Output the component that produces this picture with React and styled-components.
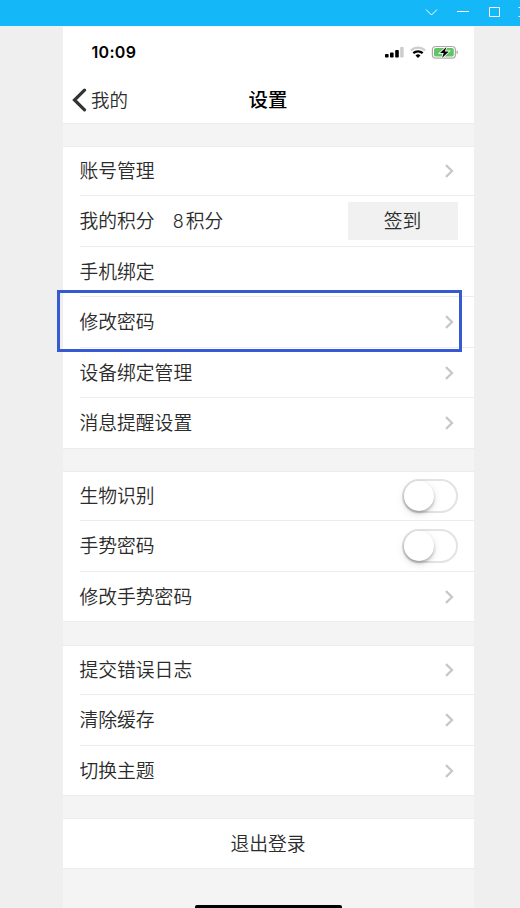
import React from 'react';
import styled, { createGlobalStyle, css } from 'styled-components';

const GlobalStyle = createGlobalStyle`
    *,
    *::after {
        box-sizing: border-box;
    }

    body {
        margin: 0;
        background-color: #efefef;
        font-family: 'Noto Sans CJK SC', sans-serif;
        overflow: hidden;
    }
`;

const Window = styled.div`
    height: 908px;
    overflow: hidden;
    background-color: #efefef;
`;

const TitleBar = styled.div`
    height: 26px;
    background-color: #14b8f8;
`;

const Phone = styled.main`
    width: 411px;
    height: 882px;
    margin-left: 63px;
    border-top: 1px solid #f8f8f8;
    background-color: #f4f4f4;
    display: flex;
    flex-direction: column;
`;

const StatusBar = styled.div`
    height: 50px;
    flex-shrink: 0;
    padding: 0 16px 0 28.5px;
    background-color: white;
    display: flex;
    align-items: center;
    justify-content: space-between;
`;

const Time = styled.span`
    font-family: Inter, sans-serif;
    font-size: 16px;
    font-weight: 600;
    letter-spacing: 0.3px;
    color: #000;
`;

const NavBar = styled.header`
    height: 47px;
    flex-shrink: 0;
    padding: 0 9px;
    background-color: white;
    border-bottom: 1px solid #ececec;
    display: grid;
    grid-template-columns: 1fr auto 1fr;
    align-items: center;
`;

const BackButton = styled.button`
    padding: 0;
    border: none;
    background: none;
    display: flex;
    align-items: center;
    gap: 4px;
    font-family: inherit;
    font-size: 18.5px;
    font-weight: 350;
    line-height: 24px;
    color: #2b2b2b;
`;

const BackText = styled.span`
    padding-bottom: 3px;
`;

const Title = styled.h1`
    margin: 0;
    padding: 0 1px 3px 0;
    font-size: 19.4px;
    line-height: 24px;
    font-weight: 500;
    color: #000;
`;

const Group = styled.section`
    flex-shrink: 0;
    margin-top: ${({ $gap }) => $gap}px;
    padding-left: 16.5px;
    background-color: white;
    border-top: 1px solid #ececec;
    border-bottom: 1px solid #ececec;
`;

const Row = styled.div`
    position: relative;
    height: ${({ $height }) => $height}px;
    padding-right: 16px;
    display: flex;
    align-items: center;
    font-size: 18.8px;
    font-weight: 350;
    line-height: 26px;
    color: #2b2b2b;

    &:not(:last-child) {
        border-bottom: 1px solid #ececec;
    }

    ${({ $marked }) => $marked && css`
        &::after {
            content: '';
            position: absolute;
            top: -7px;
            left: -22.5px;
            width: 405px;
            height: 62px;
            border: 3px solid #3759d1;
        }
    `}
`;

const Label = styled.span`
    flex: 1;
    padding-bottom: 2px;
`;

const Points = styled.span`
    margin-left: 18px;
`;

const Digit = styled.span`
    margin-right: 2px;
    font-family: Inter, sans-serif;
    font-size: 18px;
    font-weight: 350;
    line-height: 1;
`;

const CheckInButton = styled.button`
    width: 110px;
    height: 38px;
    padding: 0 1px 3px 0;
    border: none;
    background-color: #f1f1f1;
    font-family: inherit;
    font-size: 18.8px;
    font-weight: 350;
    line-height: 26px;
    color: #2b2b2b;
`;

const Switch = styled.span`
    width: 56px;
    height: 34px;
    border: 2px solid #e3e3e3;
    border-radius: 17px;
    background-color: white;
    display: flex;
    align-items: center;
`;

const Knob = styled.span`
    width: 30px;
    height: 30px;
    border-radius: 50%;
    background-color: white;
    box-shadow: 0 2px 3px rgba(0, 0, 0, 0.25), 0 3px 8px rgba(0, 0, 0, 0.12);
`;

const LogoutButton = styled.button`
    height: 51px;
    flex-shrink: 0;
    margin-top: 22px;
    padding: 0 1px 2px 0;
    border: solid #ececec;
    border-width: 1px 0;
    background-color: white;
    font-family: inherit;
    font-size: 18.8px;
    font-weight: 350;
    color: #2b2b2b;
`;

const HomeIndicator = styled.div`
    width: 147px;
    height: 5px;
    flex-shrink: 0;
    margin: 36px 0 0 132px;
    border-radius: 2px;
    background-color: #000;
`;

const WindowControls = () => (
    <svg width="520" height="26" fill="none" stroke="white" display="block">
        <path d="M426 9.5l5.5 5.5 5.5-5.5M457 11.5h12M489.5 7.5h10v9h-10zM520 7.5h-1.5M520 16.5h-1.5" />
    </svg>
);

const StatusIcons = () => (
    <svg width="75" height="14" viewBox="0 0 75 14">
        <rect x="2" y="9" width="3.6" height="3.6" rx="0.8" />
        <rect x="7" y="7.4" width="3.6" height="5.2" rx="0.8" />
        <rect x="12.2" y="4.9" width="3.6" height="7.7" rx="0.8" />
        <rect x="17.2" y="2" width="3.4" height="10.6" rx="0.8" fill="#ccc" />
        <g fill="none" strokeWidth="2.3">
            <path d="M28 5.4a10.4 10.4 0 0 1 14 0" stroke="#ccc" />
            <path d="M30.3 8.2a6.9 6.9 0 0 1 9.4 0" stroke="#000" />
        </g>
        <path d="M32.5 10.4a3.9 3.9 0 0 1 5 0L35 13z" />
        <rect x="49.4" y="1.5" width="23" height="11.6" rx="3.4" fill="white" stroke="#aaa" strokeWidth="1.2" />
        <rect x="51" y="3" width="19.8" height="8.6" rx="1.9" fill="#62c466" />
        <path d="M73.6 5.3c1.6.6 1.6 3.4 0 4z" fill="#999" />
        <path d="M63.4 2L57 8h3.7L59 13l6.8-6.6h-3.9z" stroke="white" strokeWidth="1.6" paintOrder="stroke" />
    </svg>
);

const BackIcon = () => (
    <svg width="15" height="24" viewBox="0 0 15 24" fill="none">
        <path d="M12.5 2.2L2.5 12l10 9.8" stroke="#333" strokeWidth="3.2" strokeLinecap="round" />
    </svg>
);

const Chevron = () => (
    <svg width="14" height="16" viewBox="0 0 14 16" fill="none">
        <path d="M2 2.2L8 8l-6 5.8" stroke="#c7c7cc" strokeWidth="2.3" />
    </svg>
);

const Toggle = () => (
    <Switch role="switch" aria-checked="false">
        <Knob />
    </Switch>
);

const groups = [
    {
        gap: 22,
        rows: [
            { label: '账号管理', height: 49, arrow: true },
            { label: '我的积分', height: 51, points: 8 },
            { label: '手机绑定', height: 50 },
            { label: '修改密码', height: 51, arrow: true, marked: true },
            { label: '设备绑定管理', height: 50, arrow: true },
            { label: '消息提醒设置', height: 50, arrow: true },
        ],
    },
    {
        gap: 22,
        rows: [
            { label: '生物识别', height: 49, toggle: true },
            { label: '手势密码', height: 51, toggle: true },
            { label: '修改手势密码', height: 49, arrow: true },
        ],
    },
    {
        gap: 23,
        rows: [
            { label: '提交错误日志', height: 49, arrow: true },
            { label: '清除缓存', height: 51, arrow: true },
            { label: '切换主题', height: 49, arrow: true },
        ],
    },
];

const App = () => (
    <Window>
        <GlobalStyle />
        <TitleBar>
            <WindowControls />
        </TitleBar>
        <Phone>
            <StatusBar>
                <Time>10:09</Time>
                <StatusIcons />
            </StatusBar>
            <NavBar>
                <BackButton>
                    <BackIcon />
                    <BackText>我的</BackText>
                </BackButton>
                <Title>设置</Title>
            </NavBar>
            {groups.map((group, index) => (
                <Group key={index} $gap={group.gap}>
                    {group.rows.map((row) => (
                        <Row key={row.label} $height={row.height} $marked={row.marked}>
                            <Label>
                                {row.label}
                                {row.points && (
                                    <Points>
                                        <Digit>{row.points}</Digit>积分
                                    </Points>
                                )}
                            </Label>
                            {row.points && <CheckInButton>签到</CheckInButton>}
                            {row.toggle && <Toggle />}
                            {row.arrow && <Chevron />}
                        </Row>
                    ))}
                </Group>
            ))}
            <LogoutButton>退出登录</LogoutButton>
            <HomeIndicator />
        </Phone>
    </Window>
);

export default App;
